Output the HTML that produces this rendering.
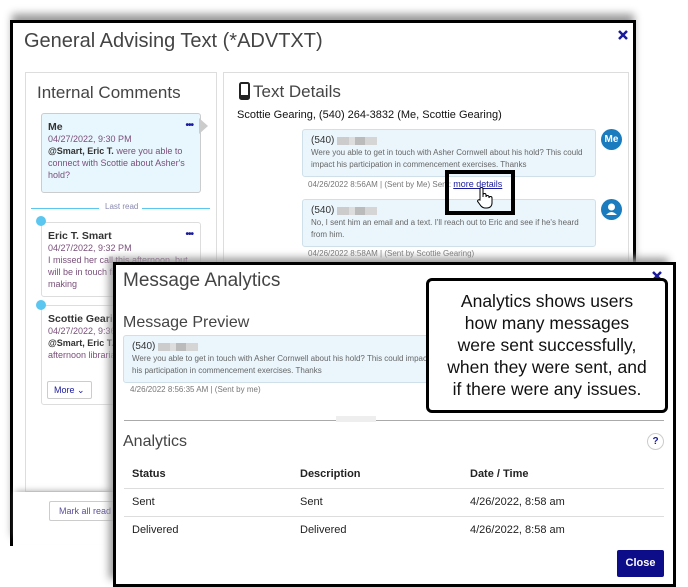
<!DOCTYPE html>
<html><head><meta charset="utf-8">
<style>
*{box-sizing:border-box;margin:0;padding:0}
body{width:688px;height:587px;background:#fff;position:relative;overflow:hidden;font-family:"Liberation Sans",sans-serif}
.a{position:absolute;white-space:nowrap}
.card,.bub{white-space:normal}
.outer{left:10px;top:20px;width:626px;height:526px;border:3px solid #000;border-bottom:none;background:#fff;box-shadow:0 -8px 8px -2px #999}
.h{font-weight:300;color:#444}
.panel{border:1px solid #ddd;background:#fff}
.card{border:1px solid #ddd;border-radius:3px;background:#fff;font-size:9px;line-height:12px;color:#7a4f7a;padding:7px 6px}
.card b{color:#333;font-size:10.5px}
.dots{position:absolute;right:7px;top:6px;color:#1a1aa0;font-weight:bold;font-size:10px;letter-spacing:-1px}
.bub{background:#eaf6fc;border:1px solid #cfe0ea;border-radius:3px;font-size:8px;line-height:12px;color:#666;padding:5px 8px}
.num{font-size:10px;color:#333}
.blur{display:inline-block;width:40px;height:8px;background:linear-gradient(90deg,#ccc 0 30%,#ddd 30% 45%,#bbb 45% 70%,#d5d5d5 70%);vertical-align:middle;margin-left:3px}
.ts{font-size:8px;color:#777}
.modal{left:113px;top:262px;width:563px;height:325px;border:3px solid #000;background:#fff;box-shadow:-6px -6px 8px -2px #999}
</style></head><body>
<div class="a outer"></div>
<div class="a h" style="left:24px;top:30px;font-size:20px">General Advising Text (*ADVTXT)</div>
<svg class="a" style="left:618px;top:30px" width="10" height="10"><path d="M1 1L9 9M9 1L1 9" stroke="#1a1a9c" stroke-width="2.5"/></svg>
<div class="a panel" style="left:25px;top:72px;width:192px;height:420px"></div>
<div class="a h" style="left:37px;top:83px;font-size:17px">Internal Comments</div>
<div class="a card" style="left:41px;top:113px;width:160px;height:80px;background:#e8f6fd;border-color:#ccc"><b>Me</b><div class="dots">•••</div><br>04/27/2022, 9:30 PM<br><b style="font-size:9px">@Smart, Eric T.</b> were you able to connect with Scottie about Asher's hold?</div>
<div class="a" style="left:199px;top:118px;width:0;height:0;border-left:9px solid #ccc;border-top:8px solid transparent;border-bottom:8px solid transparent"></div>
<div class="a" style="left:31px;top:208px;width:68px;height:1px;background:#5bc6f0"></div>
<div class="a" style="left:105px;top:202px;font-size:8px;color:#8a8ab0">Last read</div>
<div class="a" style="left:142px;top:208px;width:68px;height:1px;background:#5bc6f0"></div>
<div class="a card" style="left:41px;top:222px;width:160px;height:75px"><b>Eric T. Smart</b><div class="dots">•••</div><br>04/27/2022, 9:32 PM<br>I missed her call this afternoon, but will be in touch first thing. Thanks for making</div>
<div class="a" style="left:36px;top:216px;width:10px;height:10px;border-radius:50%;background:#5bc6f0"></div>
<div class="a card" style="left:41px;top:305px;width:160px;height:100px"><b>Scottie Gearing</b><br>04/27/2022, 9:36<br><b style="font-size:9px">@Smart, Eric T.</b> s connect this afternoon librarian and think</div>
<div class="a" style="left:36px;top:300px;width:10px;height:10px;border-radius:50%;background:#5bc6f0"></div>
<div class="a" style="left:47px;top:381px;height:18px;border:1px solid #ccc;border-radius:2px;font-size:9px;color:#1a1a9c;padding:3px 6px">More ⌄</div>
<div class="a" style="left:13px;top:492px;width:200px;height:52px;background:#fff;box-shadow:0 -4px 6px -3px #aaa"></div>
<div class="a" style="left:49px;top:501px;height:20px;border:1px solid #ccc;border-radius:2px;font-size:9px;color:#5a4f9a;padding:4px 9px">Mark all read</div>
<div class="a panel" style="left:223px;top:72px;width:406px;height:200px"></div>
<svg class="a" style="left:239px;top:82px" width="11" height="18"><rect x="1" y="1" width="9" height="16" rx="1.5" fill="none" stroke="#222" stroke-width="2"/><rect x="1" y="13" width="9" height="4" fill="#222"/></svg>
<div class="a h" style="left:253px;top:82px;font-size:17px">Text Details</div>
<div class="a" style="left:237px;top:109px;font-size:11px;color:#111">Scottie Gearing, (540) 264-3832 (Me, Scottie Gearing)</div>
<div class="a bub" style="left:302px;top:129px;width:294px;height:48px"><span class="num">(540)</span><span class="blur"></span><br>Were you able to get in touch with Asher Cornwell about his hold? This could impact his participation in commencement exercises. Thanks</div>
<div class="a ts" style="left:308px;top:179px">04/26/2022 8:56AM | (Sent by Me) Sent: <span style="color:#1a1a9c;text-decoration:underline;font-size:9px">more details</span></div>
<div class="a" style="left:601px;top:129px;width:21px;height:21px;border-radius:50%;background:#1a7bbf;color:#fff;font-weight:bold;font-size:10px;text-align:center;line-height:21px">Me</div>
<div class="a bub" style="left:302px;top:199px;width:294px;height:48px"><span class="num">(540)</span><span class="blur"></span><br>No, I sent him an email and a text. I'll reach out to Eric and see if he's heard from him.</div>
<div class="a ts" style="left:308px;top:249px">04/26/2022 8:58AM | (Sent by Scottie Gearing)</div>
<div class="a" style="left:601px;top:199px;width:21px;height:21px;border-radius:50%;background:#1a7bbf"></div>
<svg class="a" style="left:601px;top:199px" width="21" height="21"><circle cx="10.5" cy="8" r="3.5" fill="#fff"/><path d="M5 16Q10.5 10 16 16Z" fill="#fff"/></svg>
<div class="a" style="left:445px;top:170px;width:70px;height:45px;border:4px solid #000"></div>
<svg class="a" style="left:475px;top:186px" width="18" height="24"><path d="M5 14V3a1.5 1.5 0 0 1 3 0v8V9a1.5 1.5 0 0 1 3 0v2a1.5 1.5 0 0 1 3 0v1a1.5 1.5 0 0 1 3 0v5c0 3-2 5-5 5h-2c-2 0-3-1-4-2l-3-4c-1-1 0-3 2-2z" fill="#fff" stroke="#000" stroke-width="1"/></svg>
<div class="a modal"></div>
<div class="a h" style="left:123px;top:270px;font-size:19px">Message Analytics</div>
<svg class="a" style="left:652px;top:271px" width="10" height="10"><path d="M1 1L9 9M9 1L1 9" stroke="#1a1a9c" stroke-width="2.5"/></svg>
<div class="a h" style="left:123px;top:314px;font-size:16px">Message Preview</div>
<div class="a bub" style="left:123px;top:335px;width:320px;height:48px"><span class="num">(540)</span><span class="blur"></span><br>Were you able to get in touch with Asher Cornwell about his hold? This could impact his participation in commencement exercises. Thanks</div>
<div class="a ts" style="left:130px;top:385px">4/26/2022 8:56:35 AM | (Sent by me)</div>
<div class="a" style="left:124px;top:420px;width:540px;height:1px;background:#aaa"></div>
<div class="a" style="left:336px;top:416px;width:40px;height:6px;background:#eee"></div>
<div class="a h" style="left:123px;top:433px;font-size:16px">Analytics</div>
<div class="a" style="left:647px;top:433px;width:17px;height:17px;border:1px solid #ccc;border-radius:50%;font-size:10px;font-weight:bold;color:#1a1a9c;text-align:center;line-height:15px">?</div>
<div class="a" style="left:132px;top:468px;font-size:11px;font-weight:bold;color:#222">Status</div>
<div class="a" style="left:300px;top:468px;font-size:11px;font-weight:bold;color:#222">Description</div>
<div class="a" style="left:470px;top:468px;font-size:11px;font-weight:bold;color:#222">Date / Time</div>
<div class="a" style="left:124px;top:488px;width:540px;height:1px;background:#ddd"></div>
<div class="a" style="left:132px;top:496px;font-size:11px;color:#222">Sent</div>
<div class="a" style="left:300px;top:496px;font-size:11px;color:#222">Sent</div>
<div class="a" style="left:470px;top:496px;font-size:11px;color:#222">4/26/2022, 8:58 am</div>
<div class="a" style="left:124px;top:516px;width:540px;height:1px;background:#ddd"></div>
<div class="a" style="left:132px;top:524px;font-size:11px;color:#222">Delivered</div>
<div class="a" style="left:300px;top:524px;font-size:11px;color:#222">Delivered</div>
<div class="a" style="left:470px;top:524px;font-size:11px;color:#222">4/26/2022, 8:58 am</div>
<div class="a" style="left:617px;top:550px;width:47px;height:27px;background:#0d0d8a;color:#fff;font-size:11px;font-weight:bold;text-align:center;line-height:27px;border-radius:2px">Close</div>
<div class="a" style="left:426px;top:278px;width:242px;height:135px;border:3px solid #000;border-radius:6px;background:#fff;font-size:17.5px;line-height:22px;color:#111;text-align:center;padding-top:9px">Analytics shows users<br>how many messages<br>were sent successfully,<br>when they were sent, and<br>if there were any issues.</div>
</body></html>
